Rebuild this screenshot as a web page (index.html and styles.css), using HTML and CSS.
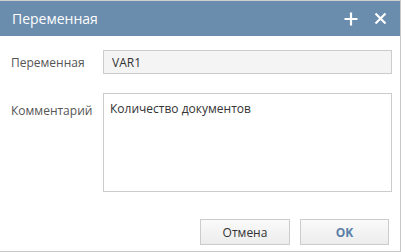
FILE: index.html
```html
<!DOCTYPE html>
<html lang="ru">
<head>
    <meta charset="UTF-8">
    <title>Переменная</title>
    <link rel="stylesheet" href="styles.css">
</head>
<body>
    <div class="dialog">
        <div class="dialog-header">
            <span class="dialog-title">Переменная</span>
            <div class="dialog-tools">
                <svg class="tool" width="14" height="14" viewBox="0 0 14 14">
                    <path d="M7 0.5V13.5M0.5 7H13.5" stroke="#fff" stroke-width="2.2" fill="none"/>
                </svg>
                <svg class="tool" width="13" height="13" viewBox="0 0 13 13">
                    <path d="M1.5 1.5L11.5 11.5M11.5 1.5L1.5 11.5" stroke="#fff" stroke-width="2.2" fill="none"/>
                </svg>
            </div>
        </div>
        <div class="dialog-body">
            <div class="field">
                <label class="field-label" for="name">Переменная</label>
                <input class="field-input" id="name" type="text" value="VAR1" readonly>
            </div>
            <div class="field field-top">
                <label class="field-label" for="comment">Комментарий</label>
                <textarea class="field-area" id="comment">Количество документов</textarea>
            </div>
        </div>
        <div class="dialog-footer">
            <button class="btn">Отмена</button>
            <button class="btn btn-ok">OK</button>
        </div>
    </div>
</body>
</html>
```

FILE: styles.css
```css
html, body {
    margin: 0;
    padding: 0;
}

body {
    font-family: "Open Sans", "DejaVu Sans", sans-serif;
    color: #444;
    background: #fff;
}

.dialog {
    width: 401px;
    height: 252px;
    box-sizing: border-box;
    border-top: 1px solid #d0d0d0;
    border-right: 1px solid #c8c8c8;
    border-bottom: 1px solid #c8c8c8;
    display: flex;
    flex-direction: column;
}

.dialog-header {
    height: 35px;
    background-color: #6a8cad;
    display: flex;
    align-items: center;
    justify-content: space-between;
    padding: 0 13px 0 12px;
}

.dialog-title {
    color: #fff;
    font-size: 14px;
}

.dialog-tools {
    display: flex;
    align-items: center;
    gap: 16px;
}

.tool {
    display: block;
}

.dialog-body {
    padding: 14px 8px 0 11px;
    flex: 1;
}

.field {
    display: flex;
    align-items: center;
}

.field-top {
    align-items: flex-start;
    margin-top: 19px;
}

.field-label {
    width: 92px;
    font-size: 12px;
    color: #555;
}

.field-top .field-label {
    margin-top: 9px;
}

.field-input,
.field-area {
    flex: 1;
    box-sizing: border-box;
    border: 1px solid #cccccc;
    font-family: inherit;
    font-size: 12px;
    color: #333;
    outline: none;
    margin: 0;
}

.field-input {
    height: 24px;
    padding: 0 8px;
    background-color: #f4f4f4;
}

.field-area {
    height: 99px;
    padding: 6px 6px;
    resize: none;
    background-color: #fff;
}

.dialog-footer {
    display: flex;
    justify-content: flex-end;
    gap: 10px;
    padding: 0 11px 6px 0;
}

.btn {
    width: 90px;
    height: 26px;
    border: 1px solid #cccccc;
    background: linear-gradient(#fafafa, #ececec);
    font-family: inherit;
    font-size: 12px;
    color: #333;
    cursor: pointer;
}

.btn-ok {
    width: 89px;
    color: #5b7fa6;
    font-weight: bold;
}
```
